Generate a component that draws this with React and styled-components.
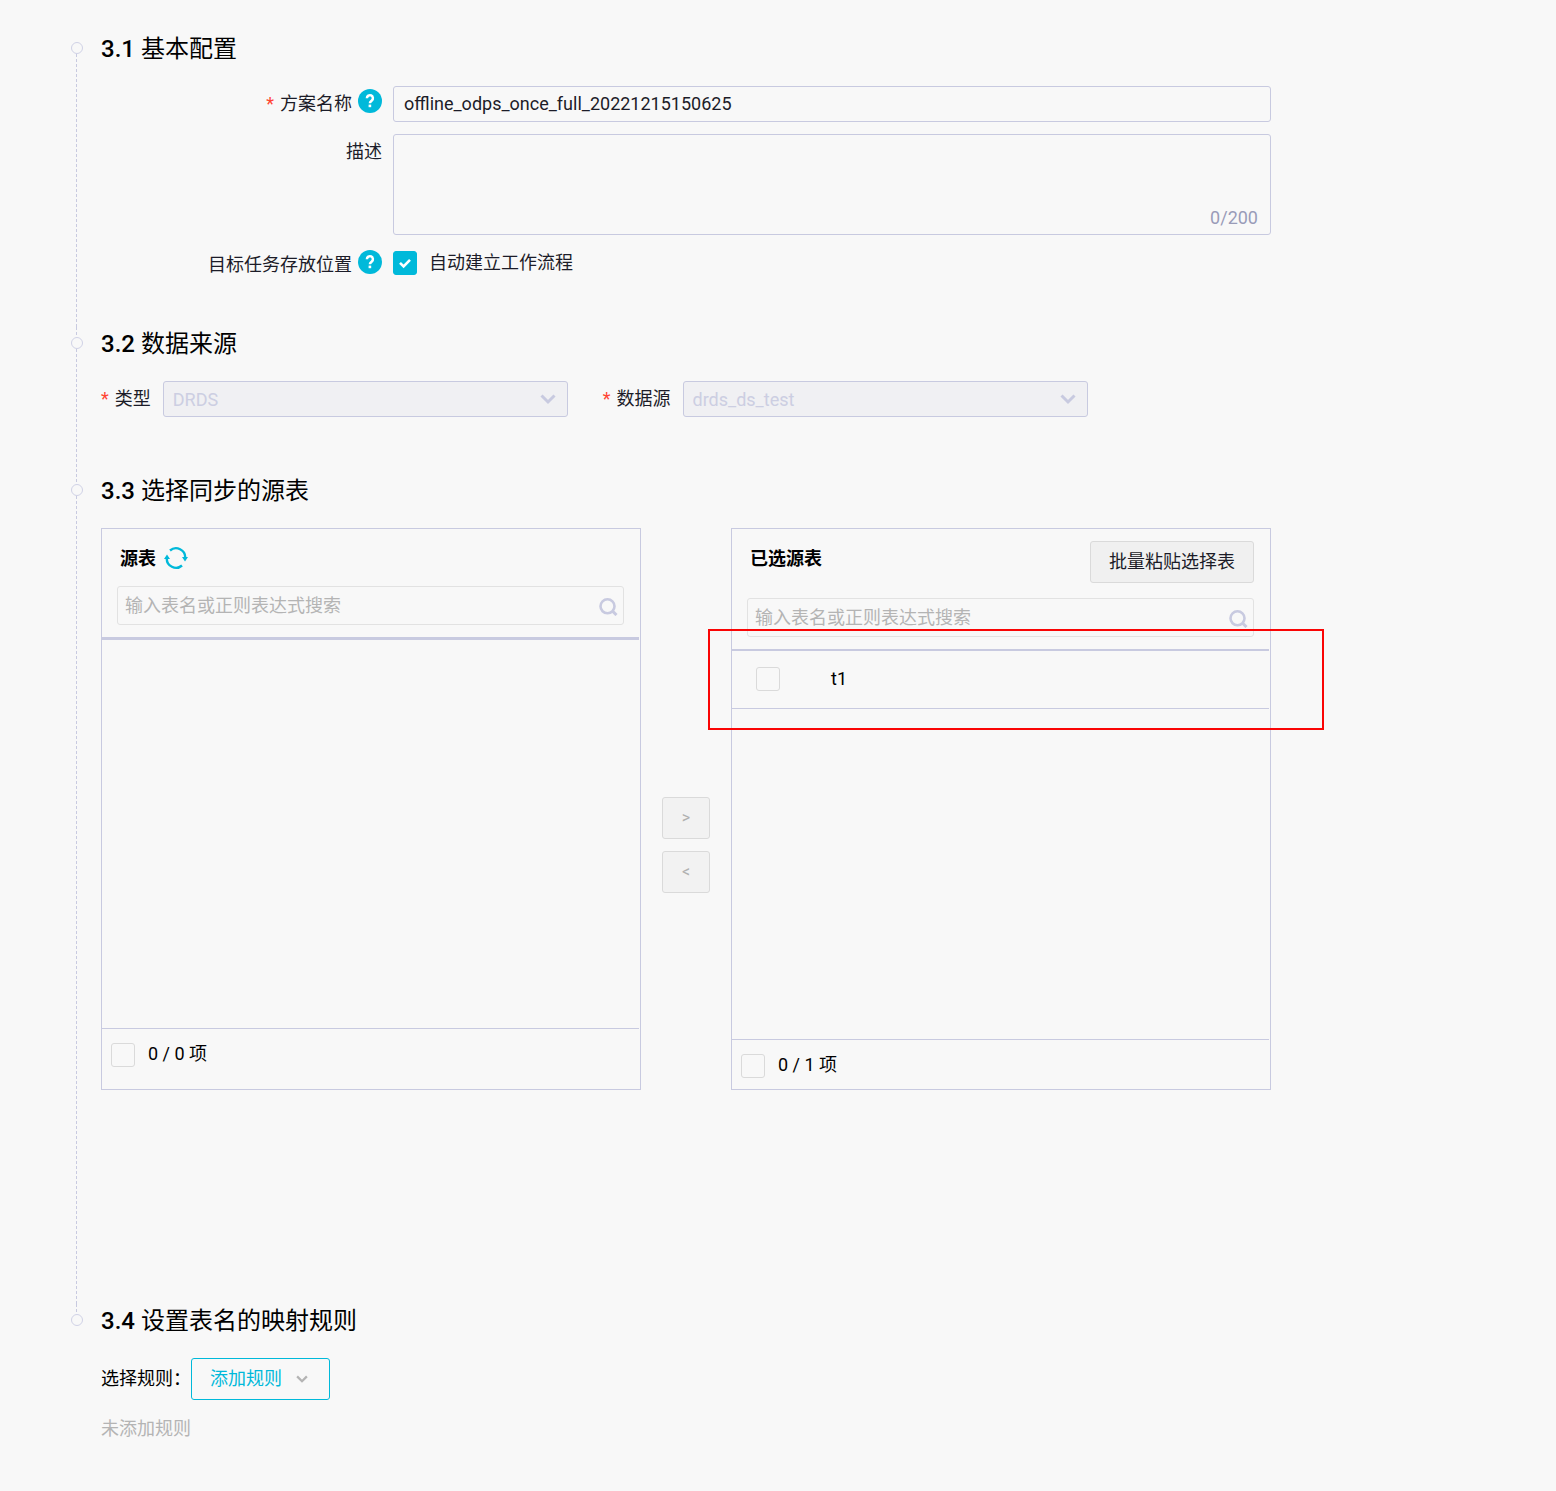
import React from "react";
import styled, { createGlobalStyle } from "styled-components";

const color = {
  page: "#f8f8f8",
  line: "#c8cae0",
  softLine: "#dadada",
  accent: "#00b9da",
  text: "#1c1c28",
  muted: "#b4b4b4",
  danger: "#ff4433",
};

const GlobalStyle = createGlobalStyle`
  *, *::before, *::after { box-sizing: border-box; }
  body {
    margin: 0;
    background: ${color.page};
    color: #000;
    font-family: Roboto, "Noto Sans CJK SC", sans-serif;
    font-size: 18px;
    line-height: 36px;
  }
  button, input, textarea, select { font: inherit; color: inherit; margin: 0; }
`;

const Page = styled.main`
  min-height: 100vh;
  padding: 32px 71px;
`;

const Steps = styled.ol`
  list-style: none;
  margin: 0;
  padding: 0;
`;

const Step = styled.li`
  display: flex;
  gap: 18px;
`;

const Rail = styled.div`
  flex: none;
  width: 12px;
  display: flex;
  flex-direction: column;
`;

const RailLine = styled.span`
  width: 1px;
  margin-left: 5px;
  background: ${(p) =>
    p.$hidden
      ? "none"
      : `repeating-linear-gradient(${color.line} 0 3px, transparent 3px 5px)`};
  ${(p) => (p.$lead ? "height: 10px;" : "flex: 1;")}
`;

const RailDot = styled.span`
  height: 12px;
  border: 1px solid #d0d2e6;
  border-radius: 50%;
`;

const StepBody = styled.section`
  flex: 1;
  min-width: 0;
  max-width: 1170px;
  padding-bottom: ${(p) => p.$after}px;
`;

const StepTitle = styled.h2`
  margin: 0 0 20px;
  font-size: 24px;
  font-weight: 400;
  line-height: 34px;
`;

const StepNumber = styled.span`
  font-weight: 500;
`;

const FormGrid = styled.div`
  display: grid;
  grid-template-columns: minmax(160px, 281px) minmax(0, 1fr);
  gap: 12px 11px;
`;

const FieldLabel = styled.div`
  display: flex;
  justify-content: flex-end;
  align-items: flex-start;
  gap: 6px;
  height: ${(p) => (p.$compact ? 32 : 36)}px;
  color: ${color.text};
`;

const Required = styled.span`
  color: ${color.danger};
  margin-right: 6px;
`;

const HelpButton = styled.button`
  display: flex;
  padding: 0;
  border: 0;
  background: none;
  margin-top: 3px;
`;

const TextInput = styled.input`
  width: 100%;
  height: 36px;
  padding: 0 10px;
  border: 1px solid ${color.line};
  border-radius: 3px;
  background: transparent;
  color: ${color.text};
`;

const AreaBox = styled.div`
  position: relative;
  display: flex;
`;

const TextArea = styled.textarea`
  width: 100%;
  height: 101px;
  padding: 6px 10px;
  border: 1px solid ${color.line};
  border-radius: 3px;
  background: transparent;
  resize: none;
`;

const Counter = styled.span`
  position: absolute;
  right: 13px;
  bottom: 5px;
  line-height: 24px;
  color: #9a9cb8;
`;

const CheckRow = styled.label`
  display: flex;
  align-items: center;
  gap: 12px;
  line-height: 32px;
  color: ${color.text};
`;

const CheckMark = styled.span`
  flex: none;
  display: grid;
  width: 24px;
  height: 24px;

  > * { grid-area: 1 / 1; }
  > svg { pointer-events: none; place-self: center; }
`;

const CheckInput = styled.input`
  appearance: none;
  width: 24px;
  height: 24px;
  border: 1px solid ${color.softLine};
  border-radius: 3px;

  &:checked {
    border-color: ${color.accent};
    background: ${color.accent};
  }
`;

const SourceRow = styled.div`
  display: flex;
  flex-wrap: wrap;
  gap: 12px 35px;
`;

const SourceField = styled.div`
  display: flex;
  gap: 12px;
  color: ${color.text};
`;

const SelectBox = styled.div`
  display: grid;
  align-items: center;
  width: 405px;

  > * { grid-area: 1 / 1; }
  > svg { justify-self: end; margin-right: 12px; pointer-events: none; }
`;

const Select = styled.select`
  appearance: none;
  width: 100%;
  height: 36px;
  padding: 0 36px 2px 9px;
  border: 1px solid ${color.line};
  border-radius: 3px;
  background: #f0f0f3;
  &:disabled { color: #cccee2; opacity: 1; }
`;

const Transfer = styled.div`
  display: grid;
  grid-template-columns: minmax(0, 1fr) 48px minmax(0, 1fr);
  column-gap: 21px;
`;

const Panel = styled.div`
  position: relative;
  display: flex;
  flex-direction: column;
  padding-right: 1px;
  border: 1px solid ${color.line};
`;

const PanelHeader = styled.div`
  display: flex;
  flex-direction: column;
  gap: 15px;
  padding: 12px 15px;
  border-bottom: ${(p) => p.$rule}px solid ${color.line};
`;

const PanelTop = styled.div`
  display: flex;
  justify-content: space-between;
  align-items: flex-start;
`;

const PanelTitle = styled.h3`
  display: flex;
  align-items: flex-start;
  gap: 8px;
  height: 30px;
  margin: 0;
  padding-left: 3px;
  font-size: 18px;
  font-weight: 700;
  line-height: 36px;
`;

const RefreshButton = styled.button`
  display: flex;
  padding: 5px 0 0;
  border: 0;
  background: none;
`;

const SearchBox = styled.div`
  display: flex;
  align-items: center;
  height: 39px;
  padding: 0 5px 0 7px;
  border: 1px solid #e2e2e2;
  border-radius: 3px;
`;

const SearchInput = styled.input`
  flex: 1;
  min-width: 0;
  height: 36px;
  padding: 0;
  border: 0;
  outline: 0;
  background: transparent;
  &::placeholder { color: ${color.muted}; opacity: 1; }
`;

const Button = styled.button`
  height: 42px;
  padding: 0 18px;
  border: 1px solid ${color.softLine};
  border-radius: 3px;
  background: #f0f0f0;
  line-height: 40px;
  color: ${color.text};
`;

const MoveColumn = styled.div`
  display: flex;
  flex-direction: column;
  gap: 12px;
  padding-top: 269px;
`;

const MoveButton = styled(Button)`
  padding: 0;
  background: #f2f2f2;
  font-size: 16px;
  line-height: 36px;
  &:disabled { color: #b0b0b0; }
`;

const PanelList = styled.ul`
  list-style: none;
  margin: 0;
  padding: 0;
  height: 388px;
`;

const PanelItem = styled.li`
  padding-bottom: 2px;
  border-bottom: 1px solid ${color.line};
`;

const ItemLabel = styled.label`
  display: flex;
  align-items: center;
  gap: 51px;
  height: 55px;
  padding-left: 24px;
`;

const PanelFooter = styled.div`
  flex: 1;
  border-top: 1px solid ${color.line};
  padding: 8px 9px 7px;
`;

const FooterLabel = styled.label`
  display: flex;
  gap: 13px;
  line-height: 34px;

  > :first-child { margin-top: 6px; }
`;

const Highlight = styled.div`
  position: absolute;
  top: 100px;
  left: -24px;
  right: -54px;
  height: 101px;
  border: 2px solid #fa0505;
  pointer-events: none;
`;

const RuleRow = styled.div`
  display: flex;
  align-items: center;
  line-height: 38px;
`;

const RuleButton = styled(Button)`
  display: flex;
  align-items: center;
  gap: 14px;
  padding: 0 21px 0 18px;
  border-color: ${color.accent};
  background: transparent;
  color: ${color.accent};
`;

const EmptyNote = styled.p`
  margin: 11px 0 0;
  color: ${color.muted};
`;

function Help({ label }) {
  return (
    <HelpButton type="button" aria-label={label}>
      <svg width="24" height="24" viewBox="0 0 24 24" fill="none">
        <circle cx="12" cy="12" r="12" fill={color.accent} />
        <path d="M8.9 9.200a3 3 0 1 1 4.900 2.300c-1.200 1-1.900 1.300-1.900 2.800" stroke="#fff" strokeWidth="2.500" />
        <rect x="10.600" y="15.600" width="2.600" height="2.600" fill="#fff" />
      </svg>
    </HelpButton>
  );
}

function Chevron({ size = 16, stroke = color.line }) {
  return (
    <svg width={size} height={size} viewBox="0 0 16 16" fill="none">
      <path d="M1.500 4.500 8 11l6.500-6.500" stroke={stroke} strokeWidth="3" />
    </svg>
  );
}

function SearchIcon() {
  return (
    <svg width="20" height="20" viewBox="0 0 20 20" fill="none" stroke={color.line} strokeWidth="2.600">
      <circle cx="9.500" cy="10.300" r="7" />
      <path d="m14.500 15.200 4 3.800" strokeWidth="3" />
    </svg>
  );
}

function RefreshIcon() {
  return (
    <svg width="24" height="24" viewBox="0 0 24 24" fill="none" stroke={color.accent} strokeWidth="2.400">
      <path d="M6 4.500A9.200 9.200 0 0 1 21.200 12" />
      <path d="M18 19.500A9.200 9.200 0 0 1 2.800 12" />
      <path d="M18 11h6l-3 4.600zM6 13H0l3-4.600z" fill={color.accent} stroke="none" />
    </svg>
  );
}

function Checkbox({ tick, ...rest }) {
  return (
    <CheckMark>
      <CheckInput type="checkbox" {...rest} />
      {tick && (
        <svg width="14" height="12" viewBox="0 0 14 12" fill="none">
          <path d="m2 5.800 3.600 3.600L12 2.800" stroke="#fff" strokeWidth="2.600" />
        </svg>
      )}
    </CheckMark>
  );
}

function TimelineStep({ number, title, after, first, last, children }) {
  return (
    <Step>
      <Rail>
        <RailLine $lead $hidden={first} />
        <RailDot />
        <RailLine $hidden={last} />
      </Rail>
      <StepBody $after={after}>
        <StepTitle>
          <StepNumber>{number}</StepNumber> {title}
        </StepTitle>
        {children}
      </StepBody>
    </Step>
  );
}

function SourceSelect({ id, label, value }) {
  return (
    <SourceField>
      <label htmlFor={id}>
        <Required>*</Required>
        {label}
      </label>
      <SelectBox>
        <Select id={id} disabled defaultValue={value}>
          <option>{value}</option>
        </Select>
        <Chevron />
      </SelectBox>
    </SourceField>
  );
}

function TransferPanel({ title, rule, action, extra, items, count, children }) {
  return (
    <Panel>
      <PanelHeader $rule={rule}>
        <PanelTop>
          <PanelTitle>
            {title}
            {extra}
          </PanelTitle>
          {action}
        </PanelTop>
        <SearchBox>
          <SearchInput type="text" aria-label={title} placeholder="输入表名或正则表达式搜索" />
          <SearchIcon />
        </SearchBox>
      </PanelHeader>
      <PanelList>
        {items.map((name) => (
          <PanelItem key={name}>
            <ItemLabel>
              <Checkbox />
              <span>{name}</span>
            </ItemLabel>
          </PanelItem>
        ))}
      </PanelList>
      <PanelFooter>
        <FooterLabel>
          <Checkbox />
          <span>{count}</span>
        </FooterLabel>
      </PanelFooter>
      {children}
    </Panel>
  );
}

export default function App() {
  return (
    <Page>
      <GlobalStyle />
      <Steps>
        <TimelineStep number="3.1" title="基本配置" after={48} first>
          <FormGrid>
            <FieldLabel>
              <label htmlFor="plan-name">
                <Required>*</Required>
                方案名称
              </label>
              <Help label="方案名称" />
            </FieldLabel>
            <TextInput id="plan-name" type="text" defaultValue="offline_odps_once_full_20221215150625" />
            <FieldLabel>
              <label htmlFor="plan-desc">描述</label>
            </FieldLabel>
            <AreaBox>
              <TextArea id="plan-desc" maxLength={200} />
              <Counter>0/200</Counter>
            </AreaBox>
            <FieldLabel $compact>
              <label htmlFor="auto-flow">目标任务存放位置</label>
              <Help label="目标任务存放位置" />
            </FieldLabel>
            <CheckRow>
              <Checkbox id="auto-flow" defaultChecked tick />
              自动建立工作流程
            </CheckRow>
          </FormGrid>
        </TimelineStep>

        <TimelineStep number="3.2" title="数据来源" after={57}>
          <SourceRow>
            <SourceSelect id="source-type" label="类型" value="DRDS" />
            <SourceSelect id="source-name" label="数据源" value="drds_ds_test" />
          </SourceRow>
        </TimelineStep>

        <TimelineStep number="3.3" title="选择同步的源表" after={214}>
          <Transfer>
            <TransferPanel
              title="源表"
              rule={3}
              items={[]}
              count="0 / 0 项"
              extra={
                <RefreshButton type="button" aria-label="源表">
                  <RefreshIcon />
                </RefreshButton>
              }
            />
            <MoveColumn>
              <MoveButton type="button" disabled>&gt;</MoveButton>
              <MoveButton type="button" disabled>&lt;</MoveButton>
            </MoveColumn>
            <TransferPanel
              title="已选源表"
              rule={2}
              items={["t1"]}
              count="0 / 1 项"
              action={<Button type="button">批量粘贴选择表</Button>}
            >
              <Highlight />
            </TransferPanel>
          </Transfer>
        </TimelineStep>

        <TimelineStep number="3.4" title="设置表名的映射规则" after={0} last>
          <RuleRow>
            <span>选择规则：</span>
            <RuleButton type="button">
              添加规则
              <Chevron size={12} stroke="#b4b4b4" />
            </RuleButton>
          </RuleRow>
          <EmptyNote>未添加规则</EmptyNote>
        </TimelineStep>
      </Steps>
    </Page>
  );
}
